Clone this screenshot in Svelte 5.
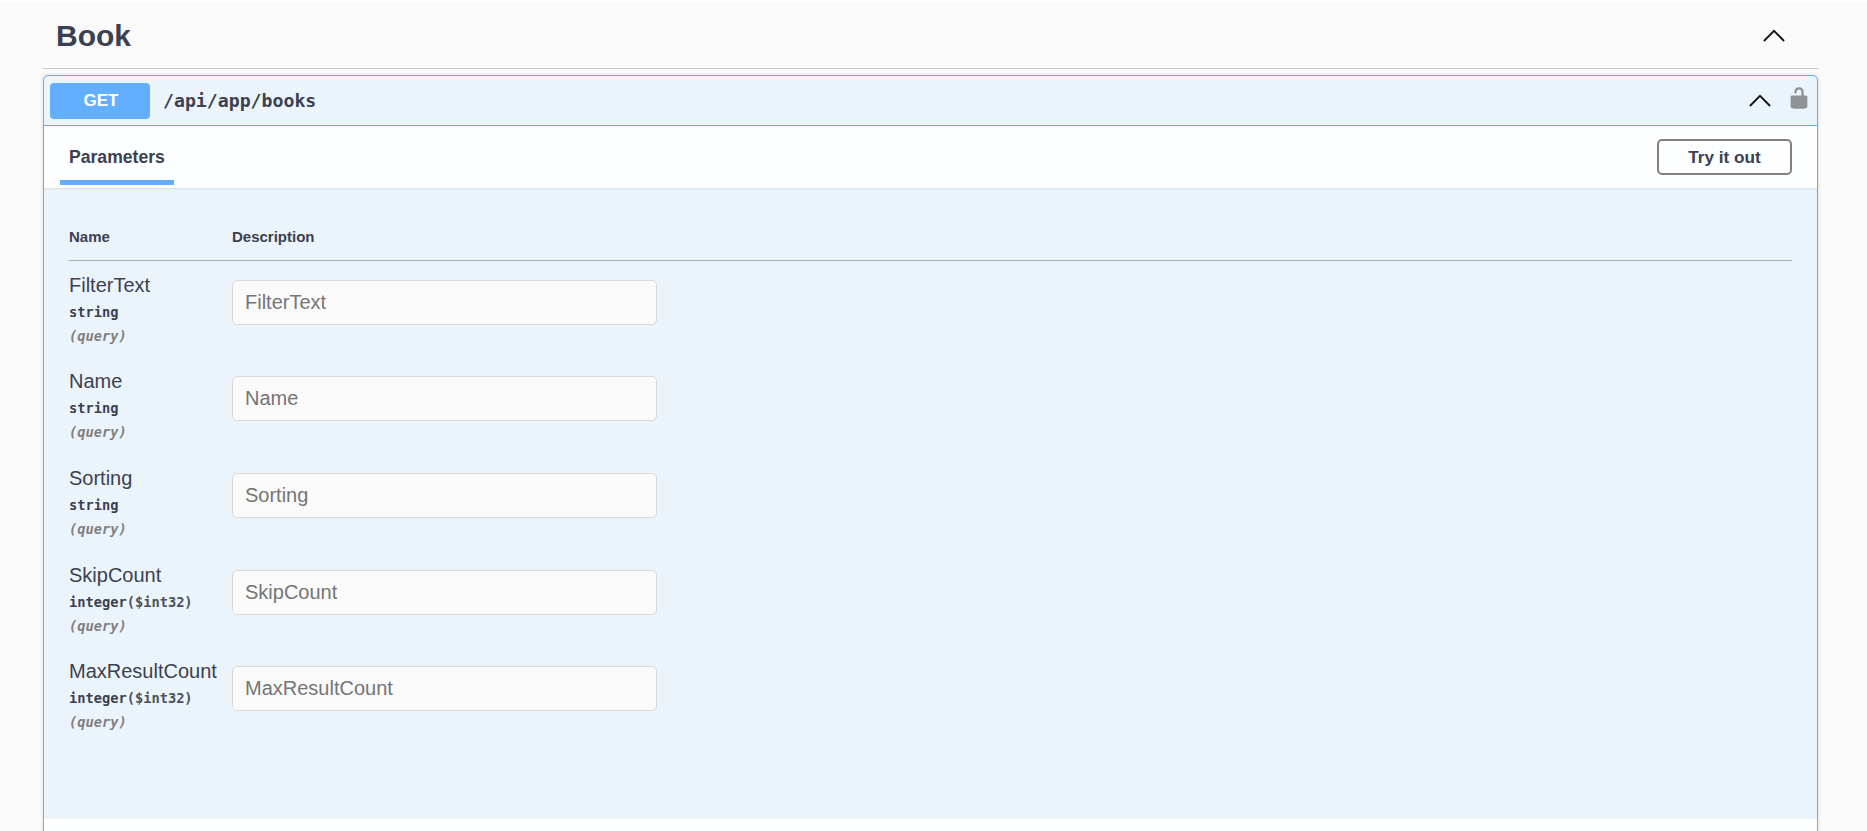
<script>
  const params = [
    { name: 'FilterText', type: 'string' },
    { name: 'Name', type: 'string' },
    { name: 'Sorting', type: 'string' },
    { name: 'SkipCount', type: 'integer', format: '($int32)' },
    { name: 'MaxResultCount', type: 'integer', format: '($int32)' }
  ];
</script>

<div class="page">
  <div class="tag">
    <h3>Book</h3>
    <svg class="arrow tag-arrow" viewBox="0 0 24 14"><path d="M1 13 L12 2 L23 13" /></svg>
  </div>

  <div class="opblock">
    <div class="summary">
      <span class="method">GET</span>
      <span class="path">/api/app/books</span>
      <svg class="arrow" viewBox="0 0 24 14"><path d="M1 13 L12 2 L23 13" /></svg>
      <svg class="lock" viewBox="0 0 20 20">
        <path d="M15.8 8H14V5.6C14 2.703 12.665 1 10 1 7.334 1 6 2.703 6 5.6V6h2v-.801C8 3.754 8.797 3 10 3c1.203 0 2 .754 2 2.199V8H4c-.553 0-1 .646-1 1.199V17c0 .549.428 1.139.951 1.307l1.197.387C5.672 18.861 6.55 19 7.1 19h5.8c.549 0 1.428-.139 1.951-.307l1.196-.387c.524-.167.953-.757.953-1.306V9.199C17 8.646 16.352 8 15.8 8z" />
      </svg>
    </div>

    <div class="tabs">
      <div class="tab">Parameters</div>
      <button class="try">Try it out</button>
    </div>

    <div class="body">
      <div class="thead">
        <div class="col-name">Name</div>
        <div>Description</div>
      </div>
      {#each params as p}
        <div class="row">
          <div class="col-name">
            <div class="pname">{p.name}</div>
            <div class="ptype">{p.type}{#if p.format}<span class="fmt">{p.format}</span>{/if}</div>
            <div class="pin">(query)</div>
          </div>
          <input placeholder={p.name} />
        </div>
      {/each}
    </div>
    <div class="foot"></div>
  </div>
</div>

<style>
  :global(body) {
    background: #fff;
    font-family: "Liberation Sans", Arial, sans-serif;
    color: #3b4151;
  }

  .page {
    margin-top: 2px;
    height: 829px;
    overflow: hidden;
    background: #fafafa;
    padding: 0 49px 0 43px;
    box-sizing: border-box;
  }

  .tag {
    display: flex;
    align-items: center;
    justify-content: space-between;
    height: 67px;
    box-sizing: border-box;
    padding: 0 33px 0 13px;
    border-bottom: 1px solid #c8c8c8;
    margin-bottom: 6px;
  }

  h3 {
    margin: 2px 0 0;
    font-size: 30px;
    font-weight: 700;
  }

  .arrow {
    width: 22px;
    height: 13px;
    flex: none;
  }

  .arrow path {
    fill: none;
    stroke: #111;
    stroke-width: 2;
  }

  .opblock {
    border: 1px solid #61affe;
    border-radius: 5px 5px 0 0;
    background: #ecf4fb;
    box-shadow: 0 0 4px rgba(0, 0, 0, 0.12);
  }

  .summary {
    display: flex;
    align-items: center;
    height: 49px;
    padding: 0 6px 0 6px;
    border-bottom: 1px solid #61affe;
  }

  .method {
    width: 100px;
    height: 36px;
    padding-left: 2px;
    box-sizing: border-box;
    background: #61affe;
    border-radius: 4px;
    color: #fff;
    font-weight: 700;
    font-size: 17px;
    display: flex;
    align-items: center;
    justify-content: center;
    margin-top: 1px;
  }

  .path {
    flex: 1;
    margin-left: 13px;
    font-family: "DejaVu Sans Mono", monospace;
    font-weight: 700;
    font-size: 18.2px;
  }

  .lock {
    width: 24px;
    height: 24px;
    margin-left: 16.5px;
    margin-bottom: 5px;
    fill: #8f9396;
  }

  .tabs {
    display: flex;
    justify-content: space-between;
    align-items: center;
    height: 62px;
    background: #fdfeff;
    padding: 0 25px 0 16px;
    box-shadow: 0 1px 2px rgba(0, 0, 0, 0.1);
  }

  .tab {
    align-self: flex-end;
    height: 58px;
    box-sizing: border-box;
    padding: 7px 9px 0;
    display: flex;
    align-items: center;
    font-size: 17.6px;
    font-weight: 700;
    width: 114px;
    border-bottom: 5px solid #61affe;
    margin-bottom: 3px;
  }

  .try {
    width: 135px;
    height: 36px;
    border: 2px solid #808080;
    border-radius: 5px;
    background: transparent;
    color: #3b4151;
    font: 700 17.2px "Liberation Sans", Arial, sans-serif;
    padding: 0;
  }

  .body {
    height: 631px;
    padding: 0 25px 0 25px;
    box-sizing: border-box;
  }

  .thead {
    display: flex;
    align-items: center;
    height: 73px;
    padding-top: 25px;
    box-sizing: border-box;
    border-bottom: 1px solid #a6adbd;
    font-size: 15px;
    font-weight: 700;
    margin-bottom: 7px;
  }

  .col-name {
    width: 163px;
    flex: none;
    padding-top: 4.6px;
  }

  .thead .col-name {
    padding-top: 0;
  }

  .row {
    display: flex;
    align-items: flex-start;
    height: 96.7px;
  }

  .pname {
    font-size: 20px;
    line-height: 25px;
  }

  .ptype {
    font-family: "DejaVu Sans Mono", monospace;
    font-size: 13.7px;
    font-weight: 700;
    line-height: 24px;
    margin-top: 2px;
  }

  .fmt {
    color: #4a5060;
  }

  .pin {
    font-family: "DejaVu Sans Mono", monospace;
    font-size: 13.7px;
    font-weight: 700;
    font-style: italic;
    color: #808080;
    line-height: 24px;
  }

  input {
    width: 425px;
    height: 45px;
    box-sizing: border-box;
    margin-top: 11.5px;
    padding: 0 12px;
    border: 1px solid #d9d9d9;
    border-radius: 5px;
    background: #fafafa;
    font-size: 20px;
    font-family: "Liberation Sans", Arial, sans-serif;
    outline: none;
  }

  input::placeholder {
    color: #757575;
  }

  .foot {
    height: 40px;
    background: #fdfeff;
  }
</style>
